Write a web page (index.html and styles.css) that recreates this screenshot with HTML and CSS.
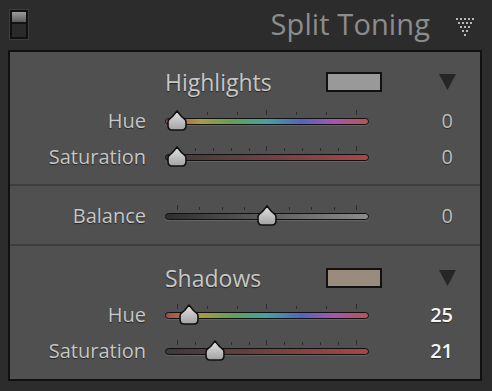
FILE: index.html
```html
<!DOCTYPE html>
<html lang="en">
<head>
    <meta charset="UTF-8">
    <title>Split Toning</title>
    <link rel="stylesheet" href="styles.css">
</head>
<body>
    <svg class="defs" width="0" height="0" aria-hidden="true">
        <defs>
            <linearGradient id="thumbFill" x1="0" y1="0" x2="0" y2="1">
                <stop offset="0" stop-color="#e4e4e4"/>
                <stop offset="1" stop-color="#a2a2a2"/>
            </linearGradient>
            <symbol id="thumbShape" viewBox="0 0 20 21">
                <path d="M10 1 L14.5 6.5 Q15.5 7.5 17 8.5 Q19 10 19 12 V15.5 Q19 20 15 20 H5 Q1 20 1 15.5 V12 Q1 10 3 8.5 Q4.5 7.5 5.5 6.5 Z"
                      fill="url(#thumbFill)" stroke="#111" stroke-width="1.6" stroke-linejoin="round"/>
            </symbol>
        </defs>
    </svg>

    <div class="header">
        <div class="toggle"><span class="toggle-on"></span></div>
        <div class="panel-title">Split Toning</div>
        <svg class="collapse-icon" width="18" height="18" viewBox="0 0 18 18">
            <g fill="#b8b8b8">
                <rect x="0" y="0" width="2" height="2"/><rect x="4" y="0" width="2" height="2"/><rect x="8" y="0" width="2" height="2"/><rect x="12" y="0" width="2" height="2"/><rect x="16" y="0" width="2" height="2"/>
                <rect x="2" y="4" width="2" height="2"/><rect x="6" y="4" width="2" height="2"/><rect x="10" y="4" width="2" height="2"/><rect x="14" y="4" width="2" height="2"/>
                <rect x="4" y="8" width="2" height="2"/><rect x="8" y="8" width="2" height="2"/><rect x="12" y="8" width="2" height="2"/>
                <rect x="6" y="12" width="2" height="2"/><rect x="10" y="12" width="2" height="2"/>
                <rect x="8" y="16" width="2" height="2"/>
            </g>
        </svg>
    </div>

    <div class="panel">
        <!-- highlights -->
        <section class="group group-top">
            <div class="group-head">
                <span class="group-title">Highlights</span>
                <span class="swatch swatch-light"></span>
                <svg class="picker-arrow" width="17" height="16" viewBox="0 0 17 16"><polygon points="0,0 17,0 8.5,16" fill="#262626"/></svg>
            </div>
            <div class="slider-row">
                <span class="slider-label">Hue</span>
                <div class="slider">
                    <div class="ticks">
                        <i class="tall"></i><i></i><i></i><i class="tall"></i><i></i><i></i><i class="tall"></i>
                    </div>
                    <div class="track track-hue"></div>
                    <svg class="thumb" style="--v: 0"><use href="#thumbShape"/></svg>
                </div>
                <span class="slider-value">0</span>
            </div>
            <div class="slider-row">
                <span class="slider-label">Saturation</span>
                <div class="slider">
                    <div class="ticks">
                        <i class="tall"></i><i></i><i></i><i></i><i></i><i class="tall"></i><i></i><i></i><i></i><i></i><i class="tall"></i>
                    </div>
                    <div class="track track-sat"></div>
                    <svg class="thumb" style="--v: 0"><use href="#thumbShape"/></svg>
                </div>
                <span class="slider-value">0</span>
            </div>
        </section>

        <!-- balance -->
        <section class="group group-mid">
            <div class="slider-row">
                <span class="slider-label">Balance</span>
                <div class="slider">
                    <div class="ticks">
                        <i class="tall"></i><i></i><i></i><i></i><i class="tall"></i><i></i><i></i><i></i><i class="tall"></i>
                    </div>
                    <div class="track track-balance"></div>
                    <svg class="thumb" style="--v: 0.5"><use href="#thumbShape"/></svg>
                </div>
                <span class="slider-value">0</span>
            </div>
        </section>

        <!-- shadows -->
        <section class="group group-bottom">
            <div class="group-head">
                <span class="group-title">Shadows</span>
                <span class="swatch swatch-dark"></span>
                <svg class="picker-arrow" width="17" height="16" viewBox="0 0 17 16"><polygon points="0,0 17,0 8.5,16" fill="#262626"/></svg>
            </div>
            <div class="slider-row">
                <span class="slider-label">Hue</span>
                <div class="slider">
                    <div class="ticks">
                        <i class="tall"></i><i></i><i></i><i class="tall"></i><i></i><i></i><i class="tall"></i>
                    </div>
                    <div class="track track-hue"></div>
                    <svg class="thumb" style="--v: 0.0694"><use href="#thumbShape"/></svg>
                </div>
                <span class="slider-value changed">25</span>
            </div>
            <div class="slider-row">
                <span class="slider-label">Saturation</span>
                <div class="slider">
                    <div class="ticks">
                        <i class="tall"></i><i></i><i></i><i></i><i></i><i class="tall"></i><i></i><i></i><i></i><i></i><i class="tall"></i>
                    </div>
                    <div class="track track-sat"></div>
                    <svg class="thumb" style="--v: 0.21"><use href="#thumbShape"/></svg>
                </div>
                <span class="slider-value changed">21</span>
            </div>
        </section>
    </div>
</body>
</html>
```
FILE: styles.css
```css
* {
    margin: 0;
    padding: 0;
    box-sizing: border-box;
}

body {
    font-family: 'Open Sans', 'Noto Sans', sans-serif;
    background: #2c2c2c;
    color: #c6c6c6;
    width: 492px;
    height: 391px;
    overflow: hidden;
}

.defs {
    position: absolute;
}

/* header */

.header {
    height: 50px;
    display: flex;
    align-items: flex-start;
    padding-left: 10px;
}

.toggle {
    margin-top: 10px;
    width: 18px;
    height: 29px;
    border: 2px solid #111;
    background: #2a2a2a;
    box-shadow: 0 0 0 1px #3d3d3d;
    display: flex;
    flex-direction: column;
}

.toggle-on {
    height: 12px;
    background: linear-gradient(#9c9c9c, #5c5c5c);
    border-bottom: 2px solid #141414;
}

.panel-title {
    margin-left: auto;
    margin-top: 4px;
    font-size: 29px;
    line-height: 40px;
    color: #8c8c8c;
    letter-spacing: 0.1px;
}

.collapse-icon {
    margin: 18px 18px 0 26px;
}

/* panel */

.panel {
    margin: 0 10px 0 8px;
    height: 331px;
    background: #505050;
    border: 2px solid #111;
}

.group {
    border-bottom: 2px solid #3e3e3e;
}

.group-top {
    padding: 17px 0 9px;
}

.group-mid {
    padding: 12px 0 10px;
}

.group-bottom {
    border-bottom: none;
    padding-top: 19px;
}

.group-head {
    display: grid;
    grid-template-columns: 161px 56px 1fr;
    align-items: center;
    height: 26px;
    padding-left: 155px;
    margin-bottom: 8px;
}

.group-bottom .group-head {
    margin-bottom: 6px;
}

.group-title {
    font-size: 23px;
    line-height: 26px;
    color: #c8c8c8;
    text-shadow: 0 1px 1px rgba(0, 0, 0, 0.55);
}

.swatch {
    height: 20px;
    border: 2px solid #111;
}

.swatch-light {
    background: #999999;
}

.swatch-dark {
    background: #9a8b7f;
}

.picker-arrow {
    justify-self: end;
    margin-right: 24px;
}

/* slider rows */

.slider-row {
    display: grid;
    grid-template-columns: 146px 222px 75px;
    height: 36px;
    align-items: center;
}

.slider-label {
    font-size: 20px;
    line-height: 36px;
    text-align: right;
    padding-right: 10px;
    color: #c6c6c6;
    text-shadow: 0 1px 1px rgba(0, 0, 0, 0.55);
}

.slider {
    position: relative;
    height: 36px;
    padding-top: 7px;
}

.ticks {
    height: 5px;
    margin: 0 21px;
    display: flex;
    justify-content: space-between;
    align-items: flex-end;
}

.ticks i {
    width: 1px;
    height: 3px;
    background: #2c2c2c;
}

.ticks i.tall {
    height: 5px;
}

.track {
    margin: 3px 9px 0;
    height: 7px;
    border: 1px solid #111;
    border-radius: 4px;
    box-shadow: 0 1px 0 rgba(255, 255, 255, 0.12);
}

.track-hue {
    background: linear-gradient(to right, #a84a4a 0%, #aa9a48 17%, #62a056 33%, #48a0a2 50%, #5464bc 67%, #a656ae 83%, #b85258 100%);
}

.track-sat {
    background: linear-gradient(to right, #3a3a3a, #a84646);
}

.track-balance {
    background: linear-gradient(to right, #2e2e2e, #8c8c8c);
}

.thumb {
    position: absolute;
    top: 7px;
    left: calc(11px + var(--v) * 180px);
    width: 20px;
    height: 21px;
}

.slider-value {
    font-size: 20px;
    line-height: 36px;
    text-align: right;
    color: #bcbcbc;
    text-shadow: 0 1px 1px rgba(0, 0, 0, 0.5);
}

.slider-value.changed {
    color: #f4f4f4;
    font-weight: 600;
}
```
